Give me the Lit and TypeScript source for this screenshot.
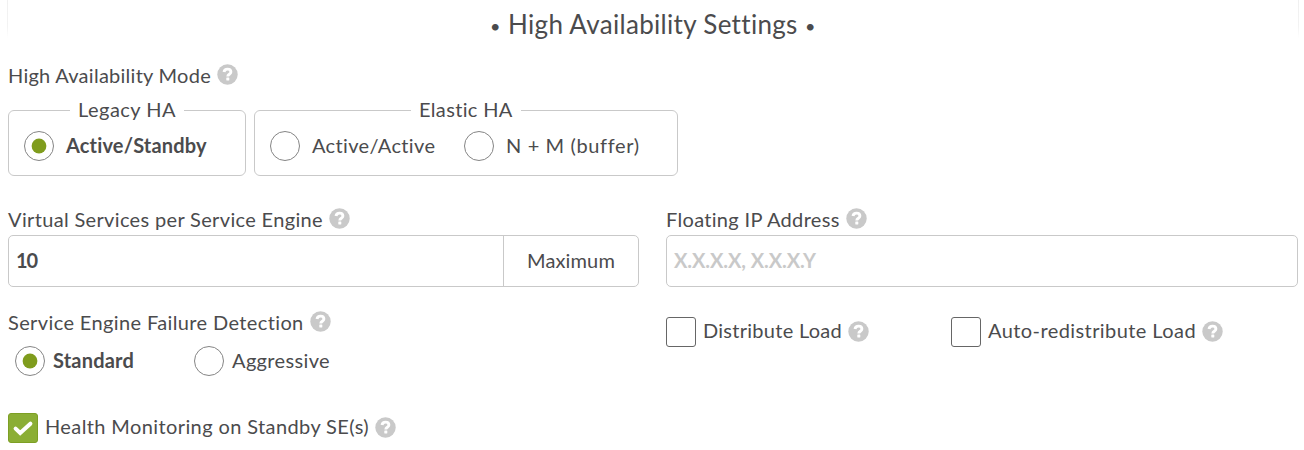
import { LitElement, html, css, nothing } from "lit";
import { customElement, property, state } from "lit/decorators.js";

/** A single line of text tracked so that it fills a given measure. */
@customElement("fit-text")
class FitText extends LitElement {
  @property({ type: Number }) w = 0;
  @property() text = "";
  static styles = css`
    :host { display: block; flex: none; height: 24px; white-space: pre; line-height: 22px; }
    .line { display: inline-block; vertical-align: top; }
  `;
  render() {
    return html`<span class="line">${this.text}</span>`;
  }
  firstUpdated() {
    const line = this.renderRoot.querySelector<HTMLElement>(".line")!;
    const natural = line.getBoundingClientRect().width;
    const spacing = (this.w - natural) / this.text.length;
    line.style.letterSpacing = `${spacing.toFixed(3)}px`;
    this.style.width = `${this.w}px`;
  }
}

@customElement("help-icon")
class HelpIcon extends LitElement {
  static styles = css`
    :host { display: block; flex: none; width: 21px; height: 21px; }
    svg { display: block; }
  `;
  render() {
    return html`<svg width="21" height="21" viewBox="0 0 21 21">
      <circle cx="10.5" cy="10.5" r="10.2" fill="#c9c9c9" />
      <path d="M7 8C7.3 6 8.6 5.1 10.5 5.1c2 0 3.4 1.1 3.4 2.8 0 2.4-3.1 2.2-3.1 4.5" fill="none" stroke="#fff" stroke-width="2.9" />
      <rect x="9.3" y="13.6" width="3" height="2.9" rx=".4" fill="#fff" />
    </svg>`;
  }
}

@customElement("radio-option")
class RadioOption extends LitElement {
  @property() label = "";
  @property({ type: Number }) w = 0;
  @property({ type: Boolean }) checked = false;
  static styles = css`
    :host { display: flex; align-items: center; flex: none; gap: var(--gap, 12px); cursor: pointer; }
    .ring { box-sizing: border-box; width: 30px; height: 30px; border: 1px solid #858585; border-radius: 50%; display: flex; align-items: center; justify-content: center; }
    .bold { font-weight: 700; }
  `;
  render() {
    return html`<span class="ring">${this.checked
        ? html`<svg width="28" height="28" viewBox="0 0 28 28"><circle cx="14" cy="14" r="7.4" fill="#7f9c1d" /></svg>`
        : nothing}</span>
      <fit-text class=${this.checked ? "bold" : ""} .w=${this.w} .text=${this.label}></fit-text>`;
  }
}

@customElement("check-option")
class CheckOption extends LitElement {
  @property() label = "";
  @property({ type: Number }) w = 0;
  @property({ type: Boolean }) checked = false;
  static styles = css`
    :host { display: flex; align-items: flex-start; flex: none; cursor: pointer; }
    .box { box-sizing: border-box; width: 30px; height: 30px; border: 1px solid #666; border-radius: 3px; margin-right: 7px; }
    .on { border-color: #7d9f24; background: #8bae35; }
    svg { display: block; margin: -1px; }
    fit-text { margin-top: 2px; }
    help-icon { margin: 4px 0 0 6px; }
  `;
  render() {
    return html`<span class="box ${this.checked ? "on" : ""}">${this.checked
        ? html`<svg width="30" height="30" viewBox="0 0 30 30"><path d="M7.6 15.6l4.6 4.4L22.4 10.7" fill="none" stroke="#fff" stroke-width="4" stroke-linecap="round" /></svg>`
        : nothing}</span>
      <fit-text .w=${this.w} .text=${this.label}></fit-text>
      <help-icon></help-icon>`;
  }
}

@customElement("app-root")
class AppRoot extends LitElement {
  @state() services = "10";
  static styles = css`
    :host { display: block; box-sizing: border-box; width: 1304px; height: 450px; overflow: hidden; background: #fff; color: #4b4b4d; font-family: Lato, "Open Sans", sans-serif; font-size: 20px; line-height: 24px; }
    .title { box-sizing: border-box; height: 64px; margin: 0 5px 0 7px; padding: 13px 0 0 483px; display: flex; align-items: flex-start; font-size: 26px; font-weight: 400;
      background: linear-gradient(#f0f0f0, #f3f3f3 70%, #fff) left top / 1px 38px no-repeat, linear-gradient(#f0f0f0, #f3f3f3 70%, #fff) right top / 1px 38px no-repeat; }
    .heading { margin: 0 8px 0 10px; }
    .bullet { font-size: 18px; margin-top: 2px; }
    .label { display: flex; align-items: flex-start; gap: 6px; height: 24px; }
    .body { padding: 0 6px 0 8px; }
    .modes { display: flex; gap: 8px; height: 78px; margin-top: 10px; }
    fieldset { box-sizing: border-box; margin: 0; min-width: 0; height: 78px; padding: 9px 0 0; border: 1px solid #c9c9c9; border-radius: 6px; }
    .legacy { width: 238px; }
    .elastic { width: 424px; }
    legend { margin: 0 auto; padding: 0 8px; height: 24px; }
    .options { display: flex; padding-left: 15px; }
    .elastic .options { gap: 28px; }
    .columns { display: grid; grid-template-columns: 631px 632px; column-gap: 27px; margin-top: 32px; }
    .field { box-sizing: border-box; display: flex; align-items: center; height: 52px; margin-top: 3px; border: 1px solid #c9c9c9; border-radius: 5px; }
    .value { flex: 1; padding-left: 7px; font-weight: 700; }
    .addon { box-sizing: border-box; width: 135px; height: 50px; display: grid; place-items: center; border-left: 1px solid #c9c9c9; }
    .placeholder { padding-left: 7px; font-weight: 700; color: #c9c9c9; }
    .detect { margin-top: 24px; }
    .speeds { display: flex; gap: 60px; margin: 11px 0 0 7px; --gap: 8px; }
    .health { margin-top: 37px; }
    .loads { display: flex; gap: 82px; margin-top: 30px; }
  `;
  private label(text: string, w: number) {
    return html`<div class="label"><fit-text .w=${w} .text=${text}></fit-text><help-icon></help-icon></div>`;
  }
  render() {
    return html`
      <header class="title">
        <fit-text class="bullet" .w=${8} .text=${"•"}></fit-text>
        <fit-text class="heading" .w=${289} .text=${"High Availability Settings"}></fit-text>
        <fit-text class="bullet" .w=${8} .text=${"•"}></fit-text>
      </header>
      <main class="body">
        ${this.label("High Availability Mode", 203)}
        <div class="modes">
          <fieldset class="legacy">
            <legend><fit-text .w=${98} .text=${"Legacy HA"}></fit-text></legend>
            <div class="options"><radio-option checked label="Active/Standby" .w=${141}></radio-option></div>
          </fieldset>
          <fieldset class="elastic">
            <legend><fit-text .w=${94} .text=${"Elastic HA"}></fit-text></legend>
            <div class="options">
              <radio-option label="Active/Active" .w=${124}></radio-option>
              <radio-option label="N + M (buffer)" .w=${133}></radio-option>
            </div>
          </fieldset>
        </div>
        <div class="columns">
          <section>
            ${this.label("Virtual Services per Service Engine", 315)}
            <div class="field">
              <div class="value"><fit-text .w=${21} .text=${this.services}></fit-text></div>
              <div class="addon"><fit-text .w=${88} .text=${"Maximum"}></fit-text></div>
            </div>
            <div class="detect">${this.label("Service Engine Failure Detection", 296)}</div>
            <div class="speeds">
              <radio-option checked label="Standard" .w=${81}></radio-option>
              <radio-option label="Aggressive" .w=${98}></radio-option>
            </div>
            <div class="health"><check-option checked label="Health Monitoring on Standby SE(s)" .w=${324}></check-option></div>
          </section>
          <section>
            ${this.label("Floating IP Address", 174)}
            <div class="field"><div class="placeholder"><fit-text .w=${142} .text=${"X.X.X.X, X.X.X.Y"}></fit-text></div></div>
            <div class="loads">
              <check-option label="Distribute Load" .w=${139}></check-option>
              <check-option label="Auto-redistribute Load" .w=${208}></check-option>
            </div>
          </section>
        </div>
      </main>`;
  }
}
